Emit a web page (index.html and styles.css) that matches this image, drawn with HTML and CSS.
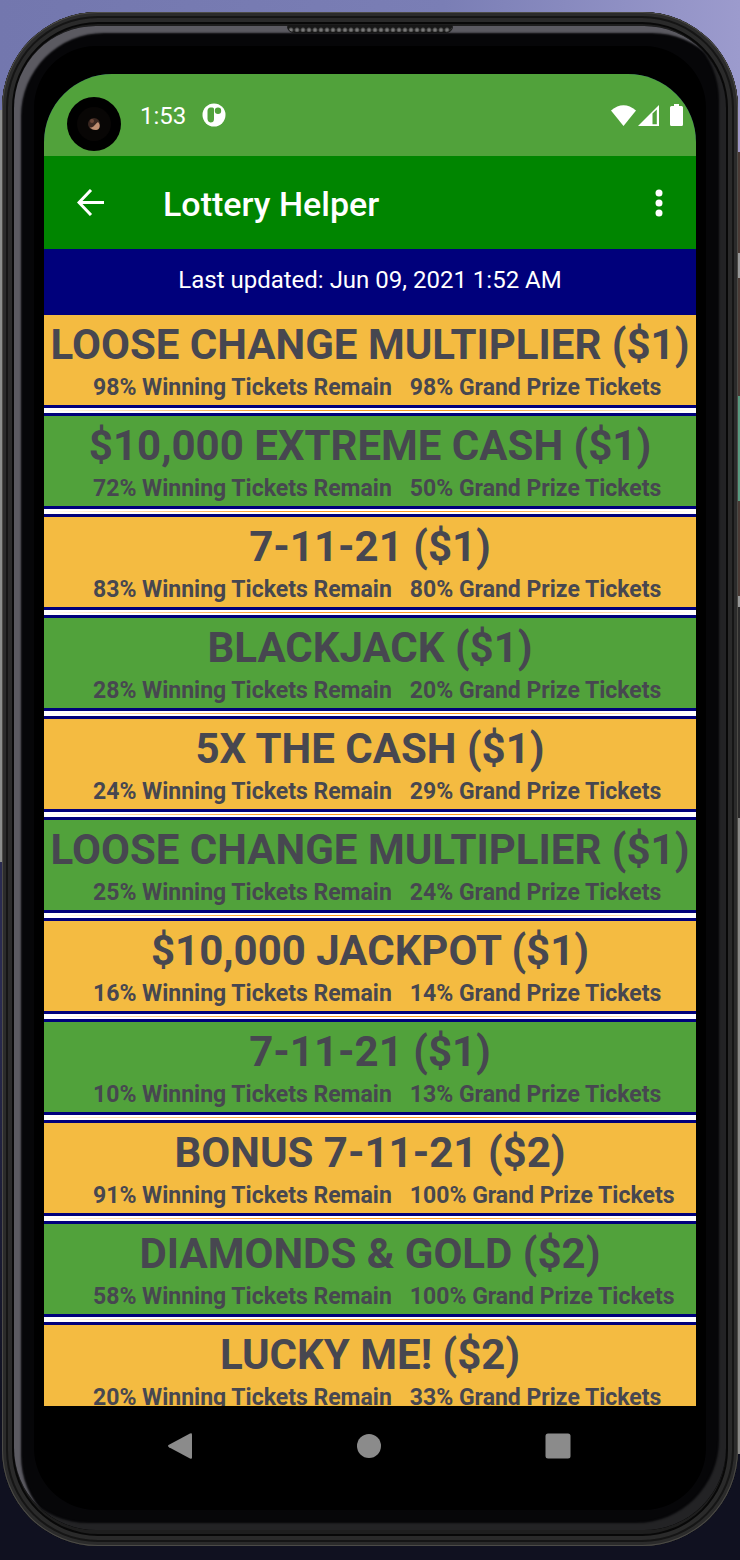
FILE: index.html
```html
<!DOCTYPE html>
<html lang="en">
<head>
<meta charset="utf-8">
<meta name="viewport" content="width=device-width, initial-scale=1">
<title>Lottery Helper</title>
<link rel="stylesheet" href="styles.css">
</head>
<body>
<div class="phone">
  <div class="speaker" aria-hidden="true"></div>
  <div class="bezel">
    <div class="screen">
      <div class="status-bar">
        <svg class="camera" viewBox="0 0 54 54" aria-hidden="true">
          <circle cx="27" cy="27" r="27" fill="#000"/>
          <circle cx="27" cy="27" r="17" fill="#080605"/>
          <circle cx="27" cy="27" r="6" fill="#3a2720"/>
          <path d="M23 30c3 2 5-3 8-5 3 3 2 8-2 8-3 0-5-1-6-3z" fill="#c08f72"/>
          <circle cx="25" cy="24" r="2" fill="#6b4638"/>
        </svg>
        <span class="clock">1:53</span>
        <svg class="notice" viewBox="0 0 24 24" aria-hidden="true">
          <circle cx="12" cy="12" r="11.500" fill="#fff"/>
          <path d="M8 4.500h2.500q1.500 0 1.500 1.500v10q0 3.500-3.500 3.500Q5.500 19 5.500 15.500V8q0-3 2.500-3.500z" fill="#51a23b"/>
          <path d="M9 6.500h1v11q-1.500 0-1.500-2V8z" fill="#51a23b"/>
          <circle cx="16" cy="7.700" r="3.200" fill="#51a23b"/>
        </svg>
        <svg class="wifi" viewBox="0 0 25 21" aria-hidden="true"><path d="M0 5.500Q12.500-5 25 5.500L12.500 21z" fill="#fff"/></svg>
        <svg class="signal" viewBox="0 0 21 21" aria-hidden="true"><path fill-rule="evenodd" d="M0 21L21 0v21zM14.500 8.500v10.800h4.300V4.500z" fill="#fff"/></svg>
        <svg class="battery" viewBox="0 0 13 22" aria-hidden="true"><path d="M4 0h5v2h2.500Q13 2 13 3.500v17q0 1.500-1.500 1.500h-10Q0 22 0 20.500v-17Q0 2 1.500 2H4z" fill="#fff"/></svg>
      </div>
      <header class="app-bar">
        <button class="icon-button" type="button" aria-label="Back">
          <svg class="arrow" viewBox="0 0 27 27"><path d="M14 1L2 13.500 14 26M2 13.500h25" fill="none" stroke="#fff" stroke-width="3"/></svg>
        </button>
        <h1 class="app-title">Lottery Helper</h1>
        <button class="icon-button" type="button" aria-label="More options">
          <svg class="dots" viewBox="0 0 8 28"><g fill="#fff"><circle cx="4" cy="4" r="3.500"/><circle cx="4" cy="14" r="3.500"/><circle cx="4" cy="24" r="3.500"/></g></svg>
        </button>
      </header>
      <p class="updated">Last updated: Jun 09, 2021 1:52 AM</p>
      <ul class="games">
        <li class="game"><h2 class="name">LOOSE CHANGE MULTIPLIER ($1)</h2><div class="stats"><span>98% Winning Tickets Remain</span><span>98% Grand Prize Tickets</span></div></li>
        <li class="game"><h2 class="name">$10,000 EXTREME CASH ($1)</h2><div class="stats"><span>72% Winning Tickets Remain</span><span>50% Grand Prize Tickets</span></div></li>
        <li class="game"><h2 class="name">7-11-21 ($1)</h2><div class="stats"><span>83% Winning Tickets Remain</span><span>80% Grand Prize Tickets</span></div></li>
        <li class="game"><h2 class="name">BLACKJACK ($1)</h2><div class="stats"><span>28% Winning Tickets Remain</span><span>20% Grand Prize Tickets</span></div></li>
        <li class="game"><h2 class="name">5X THE CASH ($1)</h2><div class="stats"><span>24% Winning Tickets Remain</span><span>29% Grand Prize Tickets</span></div></li>
        <li class="game"><h2 class="name">LOOSE CHANGE MULTIPLIER ($1)</h2><div class="stats"><span>25% Winning Tickets Remain</span><span>24% Grand Prize Tickets</span></div></li>
        <li class="game"><h2 class="name">$10,000 JACKPOT ($1)</h2><div class="stats"><span>16% Winning Tickets Remain</span><span>14% Grand Prize Tickets</span></div></li>
        <li class="game"><h2 class="name">7-11-21 ($1)</h2><div class="stats"><span>10% Winning Tickets Remain</span><span>13% Grand Prize Tickets</span></div></li>
        <li class="game"><h2 class="name">BONUS 7-11-21 ($2)</h2><div class="stats"><span>91% Winning Tickets Remain</span><span>100% Grand Prize Tickets</span></div></li>
        <li class="game"><h2 class="name">DIAMONDS &amp; GOLD ($2)</h2><div class="stats"><span>58% Winning Tickets Remain</span><span>100% Grand Prize Tickets</span></div></li>
        <li class="game"><h2 class="name">LUCKY ME! ($2)</h2><div class="stats"><span>20% Winning Tickets Remain</span><span>33% Grand Prize Tickets</span></div></li>
      </ul>
    </div>
    <nav class="nav-bar" aria-label="System">
      <button class="nav-button" type="button" aria-label="Back"><svg viewBox="0 0 26 28"><path d="M23 1.500Q25 .5 25 2.500v23q0 2-2 1L2 15.200Q0 14 2 12.800z" fill="#8b8b8b"/></svg></button>
      <button class="nav-button" type="button" aria-label="Home"><svg viewBox="0 0 26 28"><circle cx="13" cy="14" r="12" fill="#8b8b8b"/></svg></button>
      <button class="nav-button" type="button" aria-label="Recent apps"><svg viewBox="0 0 26 28"><rect x=".5" y="1.500" width="25" height="25" rx="2.500" fill="#8b8b8b"/></svg></button>
    </nav>
  </div>
</div>
</body>
</html>
```
FILE: styles.css
```css
* { box-sizing: border-box; }

body {
  margin: 0;
  min-height: 100vh;
  padding: 12px 2px 14px;
  display: flex;
  font-family: Roboto, "Noto Sans", sans-serif;
  background:
    linear-gradient(90deg, #7377ae, #7a7eb5 60%, #9c9bcd) top / 100% 110px no-repeat,
    linear-gradient(#8c8e8c 862px, #2a2b50 862px 1000px, #101120 1400px) left / 50% 100% no-repeat,
    linear-gradient(#a198c8 152px, #4a3a35 152px 253px, #999 253px 278px, #4a3a35 278px 396px, #5a9a80 396px 501px, #4a3a35 501px 596px, #999 596px 607px, #2b2a2a 607px 818px, #8a8a88 818px 1454px, #101120 1454px) right / 50% 100% no-repeat;
}

h1, h2, p, ul { margin: 0; padding: 0; }

button {
  padding: 0;
  border: 0;
  background: none;
  display: flex;
  align-items: center;
  justify-content: center;
}

.phone {
  position: relative;
  flex: 1;
  min-width: 0;
  padding: 14px 12px 16px;
  border-radius: 96px;
  background: #1e1e1e;
  box-shadow:
    inset 0 0 0 1px #4c4b47,
    inset 0 0 0 4px #2b2b2b,
    inset 0 0 0 6px #151515,
    inset 0 0 0 10px #2a2a2a,
    inset 0 0 0 12px #080808;
}

.speaker {
  position: absolute;
  top: 13px;
  left: 50%;
  width: 166px;
  height: 8px;
  margin-left: -83px;
  border-radius: 2px 2px 8px 8px;
  background: radial-gradient(circle, #777 0 1px, #181818 3px) 0 0 / 6px 8px;
  border: 1px solid #171717;
}

.bezel {
  flex: 1;
  height: 100%;
  display: flex;
  flex-direction: column;
  padding: 48px 30px 21px;
  border-radius: 82px;
  background: #000;
  box-shadow:
    inset 8px 8px 2px -1px #5b5a61,
    inset -8px -8px 2px -1px #232325,
    inset 0 0 0 20px #060608;
}

.screen {
  display: flex;
  flex-direction: column;
  overflow: hidden;
  border-radius: 68px 68px 0 0;
  background: #00007b;
}

.status-bar {
  display: flex;
  align-items: center;
  height: 82px;
  padding: 0 13px 0 23px;
  background: #51a23b;
  color: #fff;
}

.camera { width: 54px; height: 54px; margin: 18px 19px 0 0; }
.clock { padding-top: 2px; font-size: 24px; line-height: 28px; }
.notice { width: 24px; height: 24px; margin-left: 16px; }
.wifi { width: 25px; height: 21px; margin-left: auto; }
.signal { width: 21px; height: 21px; margin: 0 11px 0 2px; }
.battery { width: 13px; height: 22px; }

.app-bar {
  display: flex;
  align-items: center;
  height: 93px;
  padding: 0 14px 0 23px;
  background: #008500;
  color: #fff;
}

.icon-button { width: 46px; height: 46px; }
.arrow { width: 27px; height: 27px; }
.dots { width: 8px; height: 28px; }

.app-title {
  flex: 1;
  padding: 3px 0 0 50px;
  font-size: 34px;
  line-height: 40px;
  font-weight: 500;
}

.updated {
  height: 66px;
  padding-top: 17px;
  background: #00007b;
  color: #fff;
  font-size: 24px;
  line-height: 28px;
  text-align: center;
}

.games {
  height: 1091px;
  overflow: hidden;
  list-style: none;
}

.game {
  height: 101px;
  padding-top: 5px;
  border-bottom: 11px solid #00007b;
  position: relative;
  background: #f4bb41;
  color: #474750;
  text-align: center;
}

.game:nth-child(even) { background: #51a23b; }

.game::after {
  content: "";
  position: absolute;
  right: 0;
  bottom: -8px;
  left: 0;
  height: 5px;
  background:
    linear-gradient(90deg, #fff, #ff9a1f 35% 65%, #fff) center / 100% 1px no-repeat,
    #fff;
}

.name {
  font-size: 42px;
  line-height: 50px;
  font-weight: 700;
  white-space: nowrap;
}

.stats {
  display: flex;
  gap: 18px;
  padding: 4px 0 0 49px;
  font-size: 23px;
  line-height: 27px;
  font-weight: 700;
  white-space: nowrap;
}

.nav-bar {
  display: flex;
  justify-content: space-between;
  padding: 26px 125px 0 123px;
}

.nav-button, .nav-button svg { width: 26px; height: 28px; }
```
